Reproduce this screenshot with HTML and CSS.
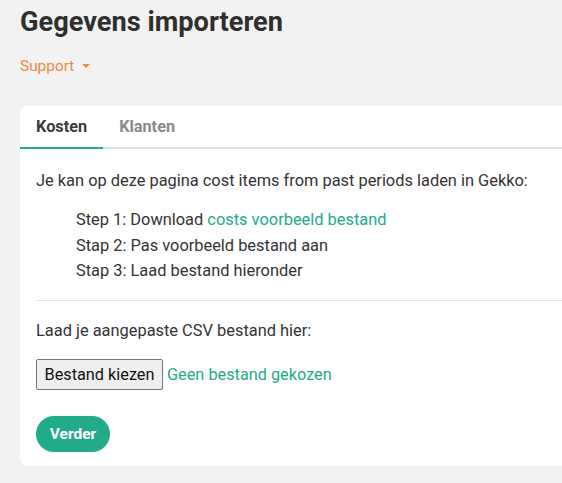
FILE: index.html
```html
<!DOCTYPE html>
<html>
<head>
<meta charset="utf-8">
<link rel="stylesheet" href="styles.css">
</head>
<body>
<div class="page">
  <h1 class="title">Gegevens importeren</h1>
  <div class="support">Support <span class="caret"></span></div>
  <div class="card">
    <div class="tabs">
      <div class="tab active">Kosten</div>
      <div class="tab">Klanten</div>
    </div>
    <div class="content">
      <p class="intro">Je kan op deze pagina cost items from past periods laden in Gekko:</p>
      <ul class="steps">
        <li>Step 1: Download <a class="link">costs voorbeeld bestand</a></li>
        <li>Stap 2: Pas voorbeeld bestand aan</li>
        <li>Stap 3: Laad bestand hieronder</li>
      </ul>
      <div class="rule"></div>
      <p class="label">Laad je aangepaste CSV bestand hier:</p>
      <div class="file">
        <button class="file-btn">Bestand kiezen</button>
        <span class="file-name">Geen bestand gekozen</span>
      </div>
      <button class="submit">Verder</button>
    </div>
  </div>
</div>
</body>
</html>
```
FILE: styles.css
```css
html, body {
  margin: 0;
  padding: 0;
  background: #f2f2f2;
  font-family: Roboto, "Noto Sans", sans-serif;
  color: #333333;
}
.page {
  padding: 5px 0 0 20px;
  width: 600px;
}
.title {
  margin: 0;
  font-size: 27.2px;
  line-height: 34px;
  font-weight: 700;
  color: #2f2f2f;
}
.support {
  margin-top: 17px;
  font-size: 15.4px;
  line-height: 20px;
  color: #ef8a3c;
  display: flex;
  align-items: center;
  gap: 8px;
}
.caret {
  width: 0;
  height: 0;
  border-left: 4px solid transparent;
  border-right: 4px solid transparent;
  border-top: 4px solid #ef8a3c;
}
.card {
  margin-top: 30px;
  background: #ffffff;
  border-radius: 8px;
  height: 360px;
}
.tabs {
  display: flex;
  border-bottom: 2px solid #dee2e6;
  height: 41px;
}
.tab {
  padding: 0 16px;
  font-size: 16.3px;
  font-weight: 700;
  line-height: 41px;
  color: #8a8a8a;
  margin-bottom: -2px;
  border-bottom: 2px solid transparent;
}
.tab.active {
  color: #3a3a3a;
  border-bottom-color: #22ab88;
}
.content {
  padding: 19px 16px 0 16px;
  font-size: 16.4px;
  line-height: 25px;
}
.intro, .label {
  margin: 0;
}
.steps {
  list-style: none;
  margin: 14px 0 0 0;
  padding: 0 0 0 40px;
  line-height: 25.5px;
}
.link {
  color: #22ab88;
}
.rule {
  margin-top: 16px;
  border-top: 1px solid #e3e3e3;
}
.label {
  margin-top: 17px;
}
.file {
  margin-top: 16px;
  display: flex;
  align-items: center;
  gap: 4px;
}
.file-btn {
  font-family: Roboto, "Noto Sans", sans-serif;
  font-size: 16.3px;
  color: #111;
  background: #efefef;
  border: 1px solid #767676;
  border-radius: 2px;
  height: 31px;
  width: 127px;
  padding: 0;
}
.file-name {
  color: #22ab88;
  font-size: 16.3px;
}
.submit {
  margin-top: 26px;
  font-family: Roboto, "Noto Sans", sans-serif;
  background: #22ab88;
  color: #fff;
  border: none;
  border-radius: 18px;
  height: 36px;
  width: 74px;
  padding: 0;
  font-size: 15.5px;
  font-weight: 700;
}
```
